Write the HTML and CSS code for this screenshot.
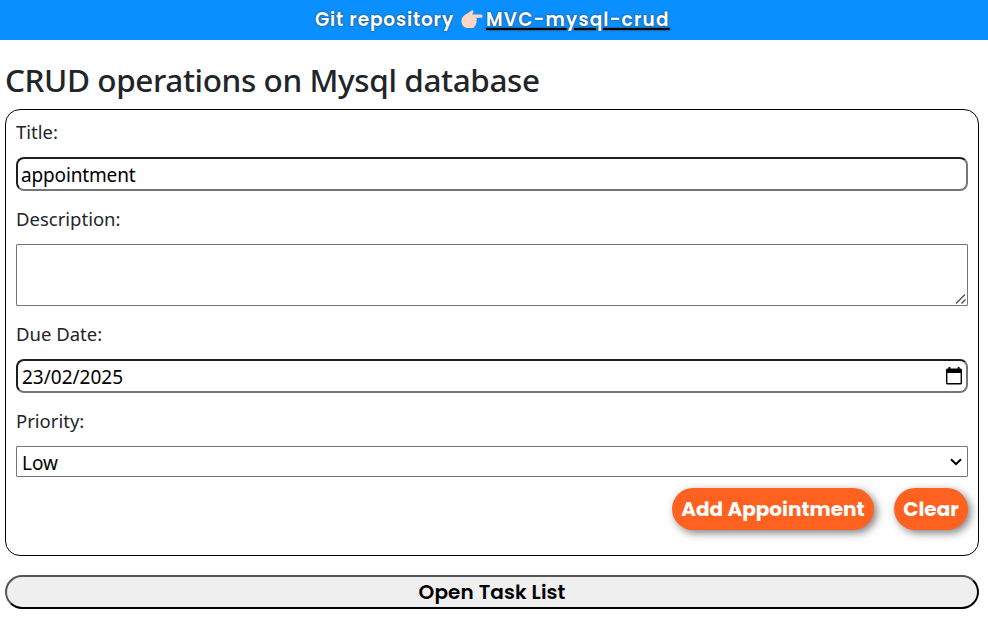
FILE: index.html
```html
<!DOCTYPE html>
<html lang="en">
<head>
<meta charset="utf-8">
<title>CRUD operations on Mysql database</title>
<link rel="stylesheet" href="styles.css">
</head>
<body>
<header class="banner">
  <span class="banner-text">Git repository</span>
  <svg class="hand" viewBox="0 0 21 19" aria-hidden="true"><path fill="#ffd6c4" d="M6.500 3C9 1.500 10.500 0 11.300.3c1.200.5.5 2.800-.7 4.200H19.500c2 0 2 3.300 0 3.300H14.500c1.200.7 1.200 2.500.2 3 .8.800.6 2.300-.4 2.800.5 1-.1 2.300-1.200 2.400C13 18 11.500 18 10 18H6C2.500 18 0 15 0 11.300 0 7 3 4.800 6.500 3z"/></svg>
  <a class="banner-link" href="#">MVC-mysql-crud</a>
</header>
<main class="page">
  <h1 class="heading"><span>CRUD operations on Mysql database</span></h1>
  <form class="panel">
    <label class="label" for="title">Title:</label>
    <input class="field inset" id="title" type="text" value="appointment">
    <label class="label" for="description">Description:</label>
    <div class="area-wrap">
      <textarea class="field area" id="description"></textarea>
      <svg class="grip" viewBox="0 0 12 12" aria-hidden="true"><path fill="none" stroke="#555" stroke-width="1.500" d="M1 10.500 10 1.500M6.500 10.500 10.500 6.500"/></svg>
    </div>
    <label class="label" for="due">Due Date:</label>
    <div class="field inset date" id="due"><span>23/02/2025</span>
      <svg class="calendar" viewBox="0 0 16 18" aria-hidden="true"><path fill="#000" fill-rule="evenodd" d="M2.500 0H4.300V1.500H11.700V0H13.500V1.500H14.500Q16 1.500 16 3V16Q16 17.500 14.500 17.500H1.500Q0 17.500 0 16V3Q0 1.500 1.500 1.500H2.500zM1.400 6V16.100H14.600V6z"/></svg>
    </div>
    <label class="label" for="priority">Priority:</label>
    <div class="field select" id="priority"><span>Low</span>
      <svg class="chevron" viewBox="0 0 12 8" aria-hidden="true"><path fill="none" stroke="#000" stroke-width="2" d="M1 1.200 6 6.200 11 1.200"/></svg>
    </div>
    <div class="actions">
      <button class="pill add" type="button"><span>Add Appointment</span></button>
      <button class="pill clear" type="button"><span>Clear</span></button>
    </div>
  </form>
  <button class="open" type="button"><span>Open Task List</span></button>
</main>
</body>
</html>
```
FILE: styles.css
```css
* { box-sizing: border-box; }
body {
  margin: 0;
  background: #fff;
  color: #212529;
  font: 19px/28px "Noto Sans", sans-serif;
}
.banner {
  height: 40px;
  padding: 0 0 1px 315px;
  display: flex;
  align-items: center;
  background: #0a8fff;
  color: #fff;
  font: 600 18.500px/28px Poppins, Inter, sans-serif;
  letter-spacing: .85px;
  white-space: nowrap;
  text-shadow: 0 0 2px #333;
}
.banner-text { width: 146px; }
.hand { width: 22px; height: 19px; margin-right: 3px; }
.banner-link {
  width: 184px;
  color: #fff;
  letter-spacing: 1.170px;
  text-decoration: underline #000 2px;
  text-underline-offset: 2px;
}
.page { padding: 21px 9px 0 5px; }
.heading {
  margin: 0;
  height: 48px;
  font-size: 31.500px;
  line-height: 37px;
  font-weight: 500;
  letter-spacing: -.4px;
  white-space: nowrap;
}
.panel {
  height: 447px;
  padding: 10px;
  display: flex;
  flex-direction: column;
  border: 1px solid #000;
  border-radius: 15px;
}
.label { height: 37px; line-height: 23px; flex: none; font-size: 18.500px; }
.field {
  display: block;
  width: 100%;
  margin: 0;
  flex: none;
  background: #fff;
  color: #000;
  font: 19px/28px "Noto Sans", sans-serif;
}
.inset {
  height: 34px;
  margin-bottom: 16px;
  padding: 2px 4px 0 3px;
  border: 2px solid;
  border-color: #1e1e1e #767676 #767676 #1e1e1e;
  border-radius: 8px;
}
#title { letter-spacing: -.15px; }
.area-wrap { position: relative; height: 62px; margin-bottom: 16px; flex: none; }
.area { height: 62px; border: 1px solid #767676; border-radius: 1px; resize: none; }
.grip { position: absolute; right: 1px; bottom: 1px; width: 12px; height: 12px; }
.date, .select { display: flex; align-items: center; justify-content: space-between; }
.date { padding-left: 4px; }
.calendar { width: 16px; height: 18px; margin-bottom: 2px; }
.select { height: 31px; padding: 2px 5px 0; border: 1px solid #767676; border-radius: 1px; }
.chevron { width: 12px; height: 8px; margin-bottom: 2px; }
.actions { display: flex; justify-content: flex-end; gap: 20px; margin-top: 11px; }
.pill {
  height: 42px;
  padding: 0;
  border: 0;
  border-radius: 21px;
  background: #ff6220;
  color: #fff;
  font: 700 20px/42px Poppins, Inter, sans-serif;
  box-shadow: 3px 3px 8px rgba(0, 0, 0, .5);
  white-space: nowrap;
}
.add { width: 202px; }
.clear { width: 74px; }
.open {
  display: block;
  width: 100%;
  height: 34px;
  margin-top: 19px;
  padding: 0;
  border: 2px solid;
  border-color: #555 #000 #000 #555;
  border-radius: 17px;
  background: #efefef;
  color: #000;
  font: 600 20px/30px Poppins, Inter, sans-serif;
  letter-spacing: .1px;
}
```
